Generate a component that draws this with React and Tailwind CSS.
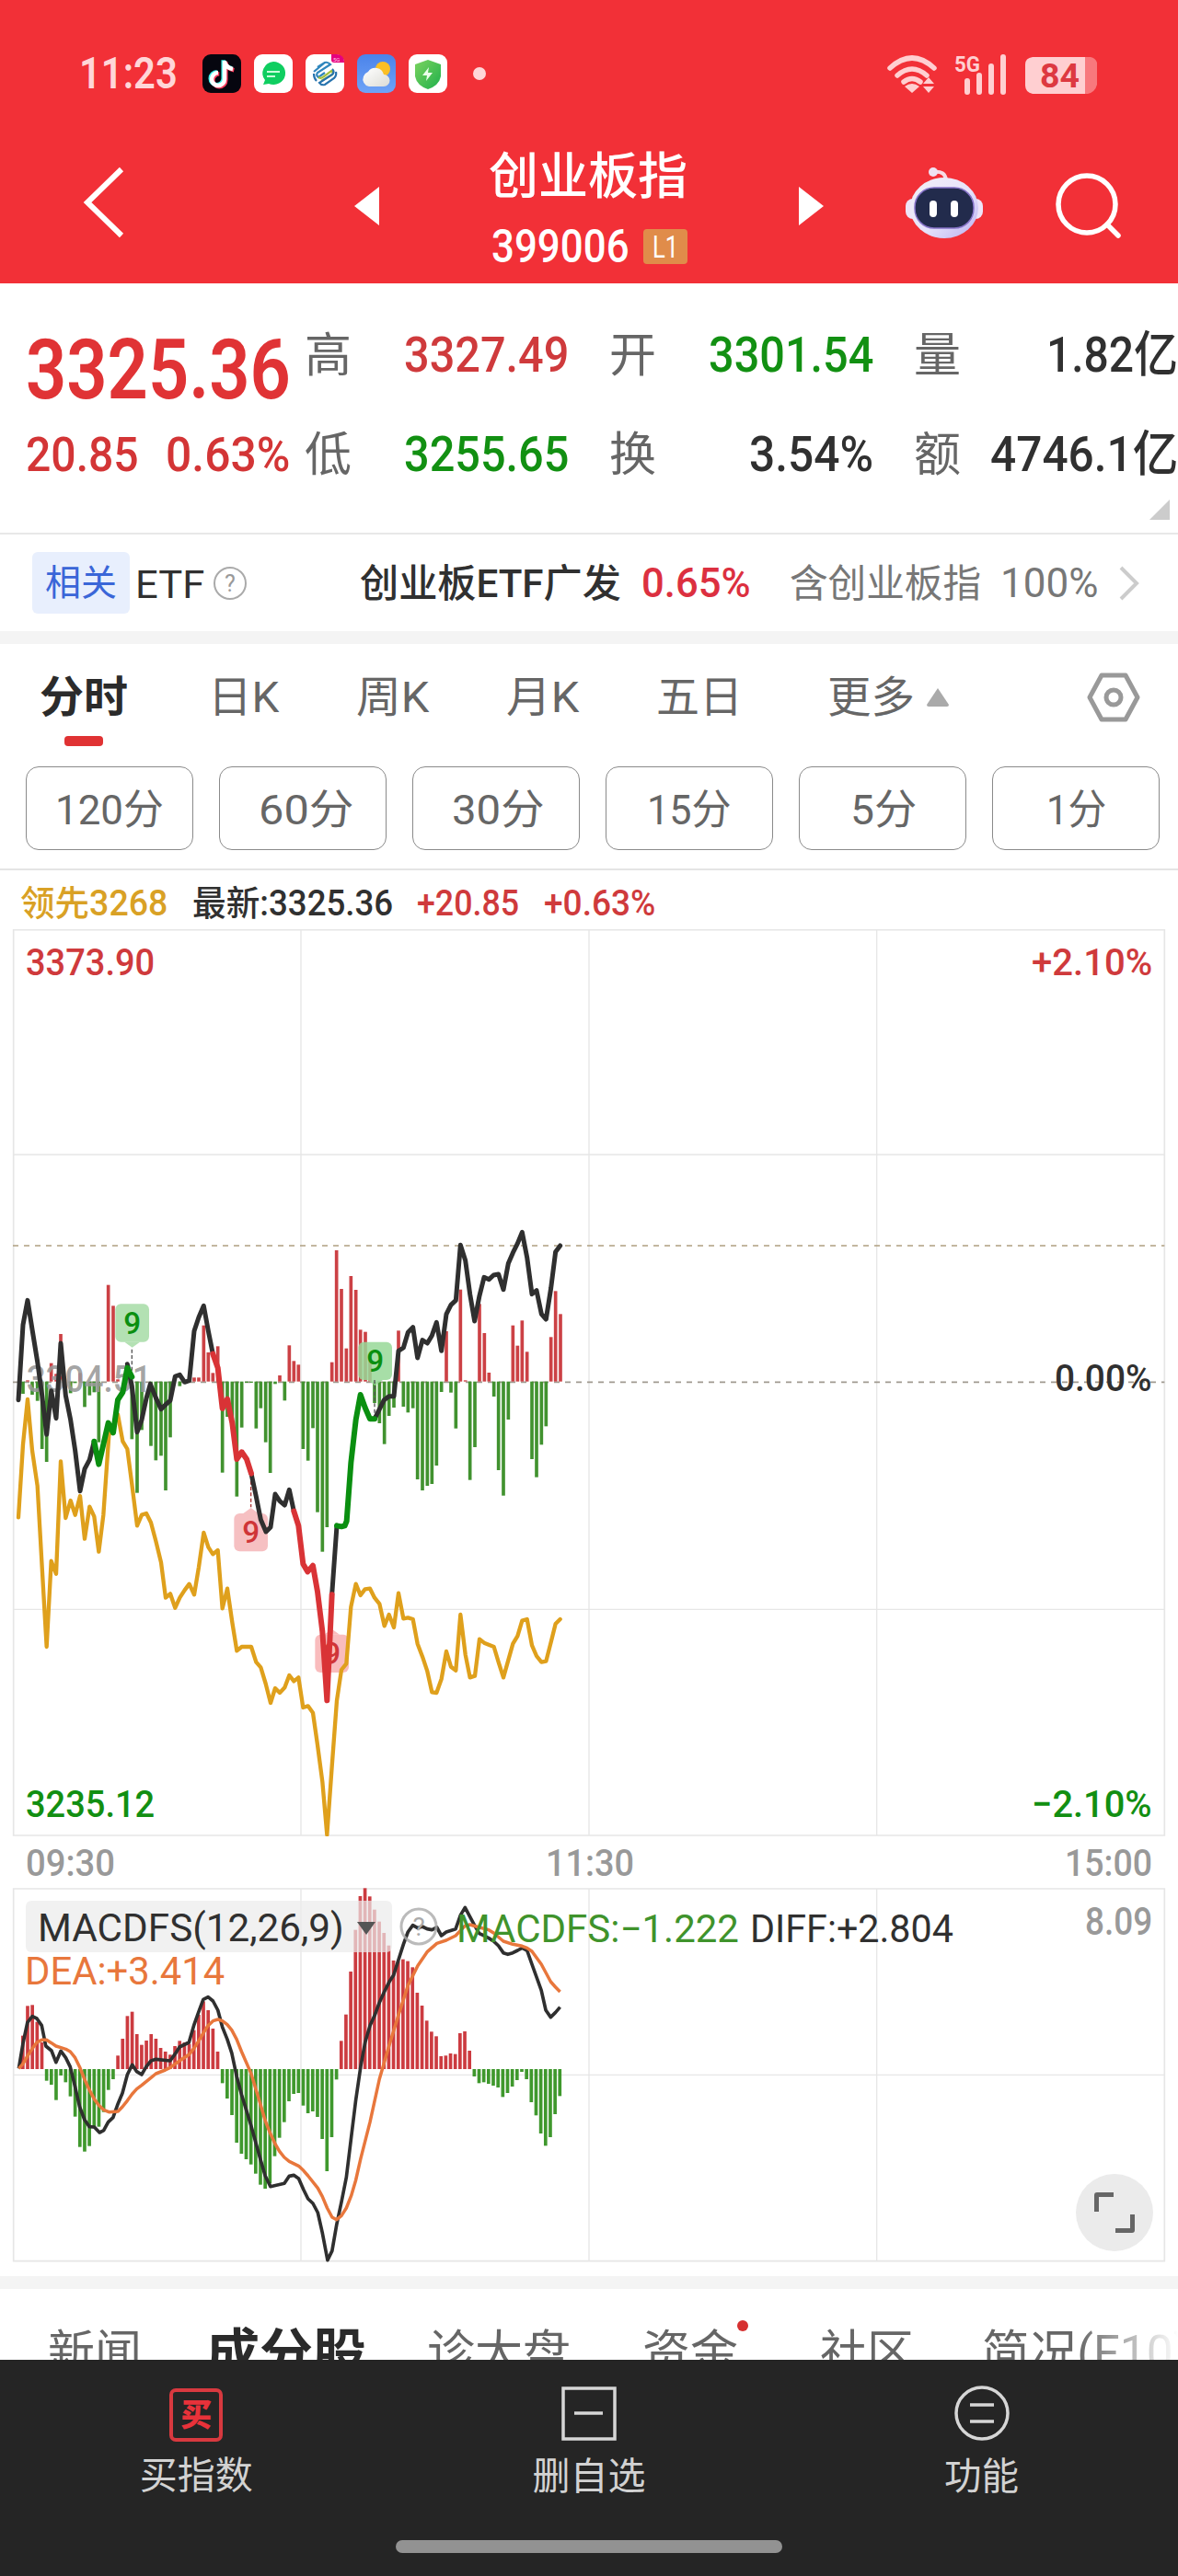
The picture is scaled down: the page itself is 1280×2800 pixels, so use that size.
import { useLayoutEffect, useRef } from 'react';
import { clsx } from 'clsx';

// Text squeezed or stretched to the width that its box is given by class
function Fit({ className, children }) {
  const box = useRef(null);
  const text = useRef(null);

  useLayoutEffect(() => {
    const scale = box.current.clientWidth / text.current.offsetWidth;
    text.current.style.transform = `scaleX(${scale})`;
  }, [children]);

  return (
    <span ref={box} className={clsx('block shrink-0 whitespace-nowrap leading-none', className)}>
      <span ref={text} className="inline-block origin-left">{children}</span>
    </span>
  );
}

function StatusBar() {
  return (
    <div className="flex h-[160px] items-center pl-[86px] text-[#ffd6d8]">
      <Fit className="w-[107px] text-[48px] font-semibold">11:23</Fit>
      <svg className="ml-[27px] h-[42px] w-[322px]" viewBox="0 0 322 42">
        <defs>
          <linearGradient id="sky" x1="0" y1="0" x2="0" y2="1">
            <stop offset="0" stopColor="#4b83ea" />
            <stop offset="1" stopColor="#6ea3f7" />
          </linearGradient>
          <linearGradient id="cloud" x1="0" y1="0" x2="1" y2="1">
            <stop offset="0" stopColor="#ffffff" />
            <stop offset="1" stopColor="#dcdcd6" />
          </linearGradient>
          <linearGradient id="shield" x1="0" y1="0" x2="1" y2="1">
            <stop offset="0" stopColor="#7bd35f" />
            <stop offset="1" stopColor="#1fb04b" />
          </linearGradient>
        </defs>
        {/* music note */}
        <rect width="42" height="42" rx="9" fill="#06060f" />
        <g fill="none" strokeWidth="4.5">
          <path d="M24 7v20a7 7 0 1 1-7-7M24 8c1 5 4 7 9 8" stroke="#ff3b5c" transform="translate(1.3 1.3)" />
          <path d="M24 7v20a7 7 0 1 1-7-7M24 8c1 5 4 7 9 8" stroke="#3ff0ea" transform="translate(-1.3 -.8)" />
          <path d="M24 7v20a7 7 0 1 1-7-7M24 8c1 5 4 7 9 8" stroke="#fff" />
        </g>
        {/* chat */}
        <g transform="translate(56 0)">
          <rect width="42" height="42" rx="9" fill="#fff" />
          <path d="M21 8a13 12.5 0 1 1-5 24l-6 1 2-5A13 12.5 0 0 1 21 8Z" fill="#0fce60" />
          <path d="M14 19h14M14 24h9" stroke="#c9ffdc" strokeWidth="2" />
        </g>
        {/* carrier */}
        <g transform="translate(112 0)">
          <rect width="42" height="42" rx="9" fill="#fff" />
          <g fill="none" strokeWidth="2.2">
            <path d="M9 19 21 9q3-1 6 2l-14 9q-2 3 1 5l7-5M13 14l8-5" stroke="#2f86bd" />
            <path d="M14 25q3 2 6-1l8-6q3 2 1 4l-12 7" stroke="#a3bf3c" />
            <path d="M33 19q1 4-2 7L21 33q-4 1-6-2l14-9q3-3 0-6M9 21q0 5 3 8" stroke="#2773ae" />
          </g>
          <path d="M28 0h6a8 8 0 0 1 8 8v1H31q-3 0-3-3Z" fill="#e5007e" />
          <text x="30" y="7.5" fontSize="6" fill="#ffd0e8">5G</text>
        </g>
        {/* weather */}
        <g transform="translate(168 0)">
          <rect width="42" height="42" rx="9" fill="url(#sky)" />
          <circle cx="28" cy="16" r="8" fill="#fbbf25" />
          <path d="M13 35a8 8 0 0 1-6-11 8 8 0 0 1 5-5 9.500 9.500 0 0 1 17 3 6.500 6.500 0 0 1 0 13Z" fill="url(#cloud)" />
        </g>
        {/* shield */}
        <g transform="translate(224 0)">
          <rect width="42" height="42" rx="9" fill="#fff" />
          <path d="m21 6 14 5v13q-2 10-14 14Q9 34 7 24V11Z" fill="url(#shield)" />
          <path d="m22 14-7 9h5l-1 6 7-9h-5Z" fill="#eaffea" />
        </g>
        <circle cx="301" cy="21" r="7" fill="#ffd6d8" />
      </svg>

      <svg className="ml-[420px] h-[48px] w-[232px]" viewBox="0 0 232 48">
        <g fill="none" stroke="#ffcfd1" strokeWidth="5.500" strokeLinecap="round">
          <path d="M5 18q24-22 48 0" />
          <path d="M13 26q16-14 32 0" />
          <path d="M20 33q9-7 18 0" />
        </g>
        <path d="M21 38q8-6 16 0l-8 7ZM41 35l6-7 6 7ZM41 38h12l-6 7Z" fill="#ffcfd1" />
        <text x="75" y="21.500" fontSize="23" fontWeight="700" fill="#ffcfd1" textLength="28" lengthAdjust="spacingAndGlyphs">5G</text>
        <path d="M89 44V32M102 44V26M115 44V16M128 44V6" stroke="#ffcfd1" strokeWidth="6" strokeLinecap="round" />
        <path d="M220 6h3a9 9 0 0 1 7 6v24q-2 8-10 10h-10V6Z" fill="#f8787d" />
        <path d="M160 6h57v40h-57q-8-2-8-9V14q0-7 8-8Z" fill="#ffcfd1" />
        <text x="168" y="38.500" fontSize="36" fontWeight="700" fill="#dd3940" textLength="43" lengthAdjust="spacingAndGlyphs">84</text>
      </svg>
    </div>
  );
}

function Header() {
  return (
    <header className="h-[308px] bg-[#f23037]">
      <StatusBar />
      <div className="flex h-[128px] items-center pl-[88px] text-white">
        <svg className="-mt-2 h-[78px] w-[50px]" viewBox="0 0 50 78" fill="none" stroke="#fff" strokeWidth="6">
          <path d="M44 3 7 39l37 36" />
        </svg>
        <svg className="ml-[247px] h-[42px] w-[28px]" viewBox="0 0 28 42"><path d="M27 0v42L0 21Z" fill="#fff" /></svg>
        <div className="ml-[118px] mt-[11px] flex w-[216px] flex-col items-center">
          <Fit className="w-[216px] text-[54px] font-medium">创业板指</Fit>
          <div className="mt-[23px] flex w-full items-center justify-between pl-[3px]">
            <Fit className="w-[150px] text-[50px] font-medium">399006</Fit>
            <span className="flex h-[38px] w-[48px] items-center justify-center rounded-[4px] bg-[#e08c4a]">
              <Fit className="w-[28px] text-[33px]">L1</Fit>
            </span>
          </div>
        </div>
        <svg className="ml-[120px] h-[42px] w-[28px]" viewBox="0 0 28 42"><path d="M1 0v42l27-21Z" fill="#fff" /></svg>
        <svg className="ml-[88px] -mt-2 h-[78px] w-[86px]" viewBox="0 0 86 78">
          <defs>
            <linearGradient id="shell" x1="0" y1="0" x2="1" y2="1">
              <stop offset="0" stopColor="#f3eff5" />
              <stop offset=".55" stopColor="#e6e3fb" />
              <stop offset="1" stopColor="#b9aef0" />
            </linearGradient>
          </defs>
          <path d="M31 6q13-2 14 9" fill="none" stroke="#f7dbe5" strokeWidth="4" />
          <circle cx="31" cy="6" r="5" fill="#efe2f2" />
          <rect x="1" y="35" width="84" height="22" rx="8" fill="#eee4f8" />
          <ellipse cx="43" cy="45" rx="37" ry="33" fill="url(#shell)" />
          <rect x="11" y="23" width="64" height="44" rx="21" fill="#222b4c" stroke="#8673c8" strokeWidth="1.500" />
          <rect x="27" y="37" width="8" height="18" rx="4" fill="#fff" />
          <rect x="50" y="37" width="8" height="18" rx="4" fill="#fff" />
        </svg>
        <svg className="ml-[78px] h-[72px] w-[72px]" viewBox="0 0 72 72" fill="none" stroke="#fff" strokeWidth="5.500">
          <circle cx="34" cy="34" r="31" />
          <path d="m56 56 12 12" strokeLinecap="round" />
        </svg>
      </div>
    </header>
  );
}

function Pair({ label, width, tone, children }) {
  return (
    <div className="flex h-[108px] w-[287px] items-center justify-between">
      <span className="text-[51px] leading-none text-[#666]">{label}</span>
      <Fit className={clsx('text-[53px] font-medium', width, tone)}>{children}</Fit>
    </div>
  );
}

function Quote() {
  return (
    <section className="relative flex h-[273px] border-b-2 border-[#e8e8e8] pl-[28px] pt-[24px]">
      <div className="w-[304px] text-[#d33536]">
        <Fit className="mt-[25px] w-[288px] text-[91px] font-semibold text-[#e03335]">3325.36</Fit>
        <div className="mt-[21px] flex w-[287px] justify-between text-[52px] font-medium">
          <Fit className="w-[123px]">20.85</Fit>
          <Fit className="w-[135px]">0.63%</Fit>
        </div>
      </div>
      <div className="flex gap-[44px]">
        <div>
          <Pair label="高" width="w-[179px]" tone="text-[#cf3a3c]">3327.49</Pair>
          <Pair label="低" width="w-[179px]" tone="text-[#129012]">3255.65</Pair>
        </div>
        <div>
          <Pair label="开" width="w-[179px]" tone="text-[#129012]">3301.54</Pair>
          <Pair label="换" width="w-[135px]" tone="text-[#303030]">3.54%</Pair>
        </div>
        <div>
          <Pair label="量" width="w-[143px]" tone="text-[#303030]">1.82亿</Pair>
          <Pair label="额" width="w-[204px]" tone="text-[#303030]">4746.1亿</Pair>
        </div>
      </div>
      <svg className="absolute bottom-[14px] right-[9px] h-[22px] w-[22px]" viewBox="0 0 22 22"><path d="M22 0v22H0Z" fill="#ccc" /></svg>
    </section>
  );
}

function RelatedEtf() {
  return (
    <section className="flex h-[105px] items-center pl-[35px] text-[#303030]">
      <span className="flex h-[67px] w-[106px] items-center justify-center rounded-[6px] bg-[#e8effd] pt-[2px] text-[39px] leading-none text-[#3a66d8]">相关</span>
      <Fit className="ml-[6px] mt-[3px] w-[75px] text-[43px]">ETF</Fit>
      <svg className="ml-[9px] h-[38px] w-[38px]" viewBox="0 0 38 38">
        <circle cx="19" cy="19" r="17" fill="none" stroke="#aaa" strokeWidth="2" />
        <text x="19" y="28" fontSize="25" fill="#999" textAnchor="middle">?</text>
      </svg>
      <Fit className="ml-[122px] mt-[2px] w-[284px] text-[42px] font-medium">创业板ETF广发</Fit>
      <Fit className="ml-[22px] w-[119px] text-[44px] font-medium text-[#dc3040]">0.65%</Fit>
      <Fit className="ml-[42px] mt-[3px] w-[208px] text-[42px] text-[#777]">含创业板指</Fit>
      <Fit className="ml-[21px] w-[106px] text-[44px] text-[#777]">100%</Fit>
      <svg className="ml-[22px] h-[38px] w-[24px]" viewBox="0 0 24 38" fill="none" stroke="#ccc" strokeWidth="4"><path d="m3 2 17 17L3 36" /></svg>
    </section>
  );
}

const periods = [
  { label: '日K', className: 'ml-[87px] w-[78px]' },
  { label: '周K', className: 'ml-[83px] w-[80px]' },
  { label: '月K', className: 'ml-[83px] w-[80px]' },
  { label: '五日', className: 'ml-[83px] w-[94px]' },
  { label: '更多', className: 'ml-[92px] w-[95px]' },
];

const minutes = [
  { label: '120分', className: 'w-[118px]' },
  { label: '60分', className: 'w-[104px]' },
  { label: '30分', className: 'w-[101px]' },
  { label: '15分', className: 'w-[92px]' },
  { label: '5分', className: 'w-[72px]' },
  { label: '1分', className: 'w-[65px]' },
];

function PeriodTabs() {
  return (
    <section className="h-[246px] border-b-2 border-[#e4e4e4] text-[47px] text-[#666]">
      <div className="flex h-[114px] items-center pl-[43px] pt-px">
        <div className="relative">
          <Fit className="w-[96px] font-bold text-[#2b2b2b]">分时</Fit>
          <span className="absolute -bottom-[30px] left-[27px] h-[11px] w-[42px] rounded-[4px] bg-[#e03233]" />
        </div>
        {periods.map((p) => (
          <Fit key={p.label} className={p.className}>{p.label}</Fit>
        ))}
        <svg className="ml-[11px] h-[22px] w-[28px]" viewBox="0 0 28 22"><path d="M14 1 26 19q0 2-2 2H4q-2 0-2-2Z" fill="#aaa" /></svg>
        <svg className="ml-[147px] h-[56px] w-[60px]" viewBox="0 0 60 56" fill="none" stroke="#999" strokeWidth="5">
          <path d="M17 4h26l13 24-13 24H17L4 28Z" strokeLinejoin="round" />
          <circle cx="30" cy="28" r="8" />
        </svg>
      </div>
      <div className="mt-[19px] flex gap-[28px] pl-[28px]">
        {minutes.map((m) => (
          <button key={m.label} className="flex h-[91px] w-[182px] items-center justify-center rounded-[14px] border border-[#8a8a8a] pt-[3px] text-[45px]">
            <Fit className={m.className}>{m.label}</Fit>
          </button>
        ))}
      </div>
    </section>
  );
}

// Chart geometry is kept at three units to the pixel; a minute is 15.49 units wide
const minuteX = (i) => 59 + i * 15.49;

const priceSegments = [
  { color: '#2f2f2f', points: '60,575 75,330 90,250 105,345 122,450 137,560 152,688 167,545 183,635 198,390 214,560 230,640 245,740 261,872 276,800 292,770 307,710' },
  { color: '#2f2f2f', points: '415,458 430,530 447,680 462,640 477,570 490,523 508,568 525,605 540,590 555,577 571,498 586,493 602,517 617,512 633,350 648,305 664,268 679,350 694,425' },
  { color: '#2f2f2f', points: '819,815 835,890 850,965 867,1005 882,990 897,882 912,905 928,918 943,868 958,938' },
  { color: '#2f2f2f', points: '1082,1210 1098,985' },
  { color: '#2f2f2f', points: '1221,637 1252,575 1268,563 1284,563 1299,415 1315,405 1330,355 1346,338 1361,438 1377,380 1393,390 1408,365 1423,322 1439,415 1455,295 1470,265 1486,250 1501,70 1517,120 1532,230 1547,318 1563,235 1578,175 1594,182 1609,168 1625,165 1641,215 1657,130 1672,95 1687,65 1702,28 1718,110 1734,230 1749,218 1765,295 1780,312 1796,210 1811,92 1826,72' },
  { color: '#0a8f10', points: '307,710 322,785 337,720 353,650 369,682 384,575 400,550 415,470 430,500' },
  { color: '#0a8f10', points: '1098,985 1113,988 1124,985 1130,970 1144,780 1160,640 1175,558 1190,600 1206,637 1221,637' },
  { color: '#d93336', points: '694,425 710,470 725,603 741,572 757,650 772,768 788,745 804,768 819,815' },
  { color: '#d93336', points: '958,938 973,985 988,1110 1003,1135 1020,1115 1035,1200 1051,1330 1066,1555 1082,1210' },
];

const leadPoints =
  '60,958 75,720 90,573 105,740 122,855 137,1120 152,1380 167,1100 183,1142 198,775 214,960 230,903 245,950 261,888 276,1028 292,923 307,955 322,1070 337,950 355,690 370,660 384,622 400,710 415,735 430,850 447,985 462,950 477,945 492,975 508,1035 525,1105 540,1220 555,1207 571,1253 586,1220 602,1195 617,1175 633,1210 648,1120 664,1008 679,1055 694,1078 710,1065 725,1255 741,1190 757,1300 772,1393 788,1380 804,1380 819,1380 835,1430 850,1447 866,1500 882,1563 897,1515 912,1530 928,1513 943,1473 958,1492 973,1480 988,1578 1004,1573 1020,1595 1035,1700 1051,1820 1066,1993 1082,1770 1098,1555 1113,1455 1129,1435 1144,1250 1160,1175 1175,1212 1190,1192 1206,1190 1221,1220 1237,1240 1253,1312 1268,1275 1284,1317 1299,1205 1315,1288 1330,1285 1346,1290 1361,1370 1377,1412 1393,1460 1408,1528 1423,1530 1439,1485 1455,1395 1470,1445 1486,1457 1501,1275 1517,1405 1532,1480 1548,1475 1563,1355 1578,1367 1610,1380 1625,1430 1641,1480 1672,1370 1687,1345 1702,1295 1718,1290 1734,1375 1749,1410 1765,1430 1780,1427 1796,1365 1811,1305 1826,1290';

const flowBars = [
  [75, 555], [90, 511], [105, 558], [122, 578], [137, 735], [152, 777], [167, 455], [183, 490], [198, 360], [230, 553],
  [245, 520], [261, 487], [276, 598], [292, 560], [307, 550], [322, 713], [353, 200], [369, 268], [384, 508], [430, 703],
  [447, 878], [462, 673], [492, 725], [508, 772], [525, 757], [540, 870], [555, 697], [586, 530], [633, 502], [648, 502],
  [664, 332], [679, 420], [694, 487], [710, 400], [725, 812], [741, 630], [757, 640], [772, 890], [788, 665], [804, 519],
  [819, 519], [835, 668], [850, 602], [866, 713], [881, 813], [897, 523], [912, 495], [928, 577], [943, 397], [958, 448],
  [973, 460], [988, 735], [1004, 773], [1020, 667], [1035, 941], [1051, 1070], [1066, 990], [1082, 452], [1097, 87],
  [1113, 213], [1129, 407], [1144, 171], [1160, 216], [1175, 346], [1191, 353], [1206, 430], [1221, 585], [1237, 651],
  [1253, 719], [1268, 627], [1284, 600], [1299, 349], [1315, 597], [1330, 616], [1346, 602], [1361, 834], [1377, 870],
  [1393, 855], [1408, 849], [1423, 789], [1439, 549], [1455, 351], [1470, 551], [1486, 668], [1501, 215], [1517, 511],
  [1532, 836], [1548, 729], [1563, 262], [1579, 357], [1594, 486], [1610, 564], [1625, 804], [1641, 887], [1657, 639],
  [1672, 332], [1687, 398], [1702, 316], [1718, 418], [1734, 768], [1749, 827], [1765, 721], [1780, 661], [1796, 370],
  [1811, 220], [1827, 295],
];

const macdBars = [
  548, 451, 448, 503, 570, 695, 708, 758, 678, 700, 746, 812, 911, 926, 908, 850, 845, 797, 725, 690,
  613, 558, 484, 470, 543, 578, 564, 543, 558, 588, 600, 610, 582, 565, 570, 575, 530, 480, 436, 465,
  525, 600, 703, 753, 807, 897, 933, 951, 968, 998, 1034, 1047, 1030, 941, 881, 830, 762, 738, 735, 776,
  801, 795, 813, 885, 990, 879, 691, 565, 479, 339, 203, 93, 67, 94, 137, 176, 213, 254, 303, 305,
  299, 305, 325, 408, 450, 499, 535, 550, 615, 613, 606, 608, 540, 534, 597, 681, 703, 700, 705, 711,
  717, 748, 735, 714, 693, 666, 690, 765, 808, 867, 907, 879, 804, 745,
];

const diffLine = [
  [50, 655], [61, 575], [73, 505], [86, 485], [98, 492], [111, 515], [122, 582], [137, 597], [149, 635], [162, 598],
  [175, 620], [187, 650], [200, 715], [212, 780], [225, 822], [238, 845], [251, 846], [265, 864], [276, 857], [288, 830],
  [301, 815], [314, 770], [326, 735], [339, 675], [352, 643], [364, 665], [377, 675], [389, 650], [402, 630], [415, 625],
  [453, 630], [466, 608], [478, 585], [503, 570], [516, 515], [529, 470], [541, 430], [554, 422], [567, 435], [580, 465],
  [592, 520], [605, 560], [617, 605], [630, 680], [643, 740], [668, 840], [693, 950], [706, 1005], [720, 1040], [757, 1030],
  [770, 1006], [782, 1003], [795, 1014], [808, 1050], [820, 1080], [833, 1095], [846, 1125], [858, 1190], [872, 1280],
  [884, 1250], [896, 1165], [909, 1090], [922, 1010], [935, 880], [947, 760], [960, 650], [972, 570], [985, 515], [998, 480],
  [1010, 440], [1023, 405], [1036, 373], [1048, 350], [1061, 300], [1074, 250], [1086, 210], [1099, 188], [1112, 197],
  [1124, 192], [1137, 200], [1150, 203], [1163, 195], [1175, 222], [1188, 210], [1213, 200], [1226, 155], [1238, 130],
  [1251, 160], [1264, 190], [1276, 215], [1289, 222], [1301, 230], [1314, 240], [1327, 255], [1340, 278], [1352, 283],
  [1365, 278], [1378, 270], [1390, 262], [1403, 270], [1416, 315], [1441, 400], [1453, 465], [1466, 488], [1479, 472], [1491, 455],
];

const deaLine = [
  [50, 655], [61, 640], [73, 615], [86, 590], [98, 570], [111, 562], [124, 562], [137, 572], [149, 582], [162, 587],
  [175, 592], [187, 600], [200, 620], [212, 650], [225, 690], [238, 725], [251, 755], [263, 775], [276, 790], [290, 797],
  [314, 795], [326, 780], [339, 760], [352, 738], [364, 722], [377, 710], [402, 685], [415, 672], [440, 660], [453, 652],
  [478, 630], [503, 610], [516, 590], [529, 565], [541, 540], [554, 515], [567, 500], [580, 495], [592, 500], [605, 512],
  [617, 530], [630, 560], [643, 600], [668, 670], [693, 770], [706, 825], [719, 865], [732, 900], [744, 925], [757, 945],
  [770, 958], [795, 973], [808, 988], [820, 1005], [846, 1045], [858, 1072], [871, 1110], [884, 1140], [896, 1148],
  [909, 1135], [922, 1110], [935, 1070], [947, 1020], [960, 950], [985, 830], [1010, 690], [1036, 580], [1061, 480],
  [1086, 385], [1112, 320], [1137, 275], [1163, 247], [1188, 237], [1213, 222], [1226, 205], [1238, 190], [1251, 186],
  [1276, 195], [1301, 203], [1314, 213], [1340, 240], [1365, 250], [1390, 256], [1403, 262], [1416, 273], [1441, 315],
  [1466, 372], [1479, 390], [1491, 405],
];

const linePoints = (line) => line.map(([x, y]) => `${(x * 1.2245).toFixed(1)},${y}`).join(' ');

function Tag({ x, y, color, bg, up }) {
  return (
    <g>
      <rect x={x - 55} y={y} width="110" height="124" rx="18" fill={bg} fillOpacity=".85" />
      <path
        d={up ? `M${x - 25} ${y}L${x} ${y - 18}l25 18Z` : `M${x - 25} ${y + 124}l25 18 25-18Z`}
        fill={bg}
        fillOpacity=".85"
      />
      <text x={x} y={y + 97} fontSize="100" fontWeight="500" fill={color} textAnchor="middle">9</text>
    </g>
  );
}

function PriceChart() {
  return (
    <div className="relative h-[986px] text-[41px] font-medium">
      <svg className="block h-[986px] w-[1280px]" viewBox="0 -960 3840 2958">
        <g fill="none" stroke="#e6e6e6" strokeWidth="4">
          <path d="M44 -958H3796V1995H44Z" strokeWidth="5" />
          <path d="M981 -958V1995M1920 -958V1995M2858 -958V1995M44 -225H3796M44 1258H3796" />
        </g>
        <path d="M42 72H3796" stroke="#b0a080" strokeWidth="5" strokeDasharray="18 18" />
        <path d="M42 517H3796" stroke="#a09a90" strokeWidth="5" strokeDasharray="18 18" />
        {flowBars.map(([x, y]) => (
          <rect
            key={x}
            x={x - 5.5}
            y={Math.min(y, 515)}
            width="11"
            height={Math.abs(y - 515)}
            fill={y < 515 ? '#cc4145' : '#41922f'}
          />
        ))}
        <text x="86" y="549" fontSize="124" fontWeight="500" fill="#999" fillOpacity=".9" textLength="408" lengthAdjust="spacingAndGlyphs">3304.51</text>
        <Tag x={431} y={262} color="#0a8f10" bg="#a6dca6" />
        <Tag x={1223} y={386} color="#0a8f10" bg="#98d898" />
        <Tag x={818} y={945} color="#cf3538" bg="#f5b5b7" up />
        <Tag x={1082} y={1340} color="#cf3538" bg="#f8b0b2" up />
        <path d="M430 410v80M1221 510v125" stroke="#555" strokeWidth="4" strokeDasharray="12 7" />
        <path d="M818 820v105" stroke="#a33" strokeWidth="4" strokeDasharray="12 7" />
        <g fill="none" strokeLinejoin="round" strokeLinecap="round">
          <polyline points={leadPoints} stroke="#dfa01c" strokeWidth="13" />
          {priceSegments.map((s) => (
            <polyline key={s.points} points={s.points} stroke={s.color} strokeWidth={s.color === '#2f2f2f' ? 15 : 18} />
          ))}
        </g>
      </svg>
      <Fit className="absolute left-[28px] top-[16px] w-[140px] text-[#cf3a3c]">3373.90</Fit>
      <Fit className="absolute right-[28px] top-[16px] w-[131px] text-[#cf3a3c]">+2.10%</Fit>
      <Fit className="absolute right-[28px] top-[468px] w-[106px] text-[#303030]">0.00%</Fit>
      <Fit className="absolute bottom-[14px] left-[28px] w-[140px] text-[#128f12]">3235.12</Fit>
      <Fit className="absolute bottom-[14px] right-[28px] w-[131px] text-[#128f12]">−2.10%</Fit>
    </div>
  );
}

function MacdChart() {
  return (
    <div className="relative h-[407px] text-[42px]">
      <svg className="block h-[407px] w-[1280px]" viewBox="0 66 3840 1221">
        <g fill="none" stroke="#e6e6e6" strokeWidth="4">
          <path d="M44 69H3796V1283H44Z" strokeWidth="5" />
          <path d="M981 69V1283M1920 69V1283M2858 69V1283M44 676H3796" />
        </g>
        {macdBars.map((y, i) => (
          <rect
            key={i}
            x={minuteX(i + 1) - 5.5}
            y={Math.min(y, 657)}
            width="11"
            height={Math.abs(y - 657)}
            fill={y < 657 ? '#cc3b40' : '#3f982d'}
          />
        ))}
        <g fill="none" strokeLinejoin="round">
          <polyline points={linePoints(diffLine)} stroke="#2f2f2f" strokeWidth="11" />
          <polyline points={linePoints(deaLine)} stroke="#e8773c" strokeWidth="10.5" />
        </g>
      </svg>
      <div className="absolute left-[28px] top-[14px] flex items-center">
        <div className="flex h-[56px] w-[398px] items-center rounded-[6px] bg-[#ebebeb]/70 pl-[13px] pt-[3px]">
          <Fit className="w-[333px] text-[43px] text-[#303030]">MACDFS(12,26,9)</Fit>
          <svg className="ml-[14px] h-[14px] w-[20px]" viewBox="0 0 20 14"><path d="M0 0h20L10 14Z" fill="#555" /></svg>
        </div>
        <svg className="ml-[8px] h-[42px] w-[42px]" viewBox="0 0 42 42">
          <circle cx="21" cy="21" r="19" fill="none" stroke="#aaa" strokeOpacity=".8" strokeWidth="3" />
          <text x="21" y="31" fontSize="28" fill="#aaa" textAnchor="middle">?</text>
        </svg>
        <Fit className="ml-[20px] mt-[6px] w-[307px] text-[#3f932c]">MACDFS:−1.222</Fit>
        <Fit className="ml-[12px] mt-[6px] w-[221px] text-[#303030]">DIFF:+2.804</Fit>
      </div>
      <Fit className="absolute left-[27px] top-[70px] w-[217px] text-[#e8773c]">DEA:+3.414</Fit>
      <Fit className="absolute right-[28px] top-[16px] w-[73px] font-medium text-[#999]">8.09</Fit>
      <span className="absolute bottom-[12px] right-[27px] flex h-[84px] w-[84px] items-center justify-center rounded-full bg-[#ebebeb]">
        <svg className="h-[44px] w-[44px]" viewBox="0 0 44 44" fill="none" stroke="#666" strokeWidth="5">
          <path d="M2.500 21V3q0-.5.5-.5h18M41.500 24v17q0 .5-.5.500H23" />
        </svg>
      </span>
    </div>
  );
}

function Charts() {
  return (
    <section>
      <div className="flex h-[64px] items-center pl-[22px] pt-[7px] text-[38px] font-medium">
        <Fit className="w-[160px] text-[#d9a125]">领先3268</Fit>
        <Fit className="ml-[27px] w-[218px] text-[#303030]">最新:3325.36</Fit>
        <Fit className="ml-[26px] w-[111px] text-[#cf3a3c]">+20.85</Fit>
        <Fit className="ml-[27px] w-[121px] text-[#cf3a3c]">+0.63%</Fit>
      </div>
      <PriceChart />
      <div className="flex h-[56px] items-center pl-[28px] pt-[2px] text-[41px] font-medium text-[#999]">
        <Fit className="w-[97px]">09:30</Fit>
        <Fit className="ml-[468px] w-[96px]">11:30</Fit>
        <Fit className="ml-[468px] w-[95px]">15:00</Fit>
      </div>
      <MacdChart />
    </section>
  );
}

function InfoTabs() {
  return (
    <section className="relative flex h-[77px] items-start overflow-hidden pl-[52px] pt-[44px] text-[51px] text-[#666]">
      <Fit className="w-[102px]">新闻</Fit>
      <Fit className="-mt-[2px] ml-[70px] w-[174px] text-[57px] font-bold text-[#2b2b2b]">成分股</Fit>
      <Fit className="ml-[66px] w-[156px]">诊大盘</Fit>
      <div className="relative ml-[78px]">
        <Fit className="w-[104px]">资金</Fit>
        <span className="absolute -right-[11px] -top-[10px] h-[12px] w-[12px] rounded-full bg-[#d63030]" />
      </div>
      <Fit className="ml-[89px] w-[102px]">社区</Fit>
      <Fit className="ml-[74px] w-[226px]">简况(F10)</Fit>
      {/* fade at the scroll edge */}
      <span className="absolute right-0 top-0 h-full w-[110px] bg-linear-to-r from-white/0 to-white" />
    </section>
  );
}

function BottomNav() {
  return (
    <nav className="h-[235px] bg-[#252525] text-[41px] text-[#d2d2d2]">
      <div className="grid h-[196px] grid-cols-3 pt-[28px]">
        <div className="flex flex-col items-center">
          <span className="mt-[3px] flex h-[58px] w-[58px] items-center justify-center rounded-[7px] border-[4px] border-[#d8393f] text-[34px] font-black leading-none text-[#e8323a]">买</span>
          <Fit className="mt-[17px] w-[123px]">买指数</Fit>
        </div>
        <div className="flex flex-col items-center">
          <svg className="h-[60px] w-[60px]" viewBox="0 0 60 60" fill="none" stroke="#d6d6d6" strokeWidth="3.500">
            <path d="M2 3h56v55H2ZM14 30h31" />
          </svg>
          <Fit className="mt-[19px] w-[123px]">删自选</Fit>
        </div>
        <div className="flex flex-col items-center">
          <svg className="h-[60px] w-[60px]" viewBox="0 0 60 60" fill="none" stroke="#d6d6d6" strokeWidth="3.500">
            <circle cx="30" cy="30" r="28" />
            <path d="M17 21h26M17 39h26" />
          </svg>
          <Fit className="mt-[19px] w-[81px]">功能</Fit>
        </div>
      </div>
      <div className="mx-auto h-[14px] w-[420px] rounded-[7px] bg-[#929292]" />
    </nav>
  );
}

export default function App() {
  return (
    <div className="h-[2800px] w-[1280px] overflow-hidden bg-white font-['Roboto','Noto_Sans_CJK_SC',sans-serif]">
      <Header />
      <Quote />
      <RelatedEtf />
      <div className="h-[14px] bg-[#f4f4f4]" />
      <PeriodTabs />
      <Charts />
      <div className="mt-[15px] h-[14px] bg-[#f4f4f4]" />
      <InfoTabs />
      <BottomNav />
    </div>
  );
}
